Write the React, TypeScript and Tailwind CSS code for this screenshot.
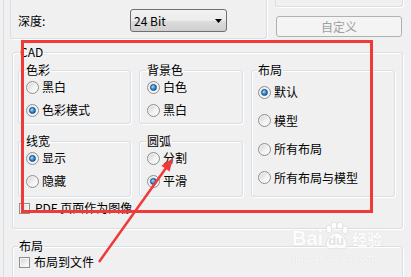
import React from "react";

function Radio({ checked }: { checked?: boolean }) {
  return (
    <span className="flex h-[13px] w-[13px] shrink-0 items-center justify-center rounded-full border border-[#8e8f8f] bg-[linear-gradient(135deg,#cfcfcf,#f2f2f2_55%,#ffffff)] shadow-[inset_0_0_0_1px_#f4f4f4]">
      {checked && (
        <span className="h-[7px] w-[7px] rounded-full border border-[#174a80] bg-[radial-gradient(circle_at_35%_35%,#a8e0ff_0%,#3591dc_45%,#0f4584_100%)]" />
      )}
    </span>
  );
}

function Check() {
  return (
    <span className="h-[11px] w-[11px] shrink-0 border border-[#8e8f8f] bg-[linear-gradient(135deg,#d0d0d0,#f0f0f0_60%,#ffffff)] shadow-[inset_0_0_0_1px_#f6f6f6]" />
  );
}

function RadioRow({ checked, label }: { checked?: boolean; label: string }) {
  return (
    <div className="flex h-[16px] items-center gap-[3px]">
      <Radio checked={checked} />
      <span className="text-[12px] leading-[16px] text-black">{label}</span>
    </div>
  );
}

function Group({
  label,
  className,
  legendClass,
  children,
}: {
  label: string;
  className: string;
  legendClass?: string;
  children?: React.ReactNode;
}) {
  return (
    <fieldset
      className={`min-w-0 rounded-[3px] border border-[#d5dfe5] shadow-[inset_1px_1px_0_#ffffff,1px_1px_0_#ffffff] ${className}`}
    >
      <legend className={`px-[1px] text-[12px] leading-[16px] text-black ${legendClass ?? "-ml-[1px]"}`}>
        {label}
      </legend>
      {children}
    </fieldset>
  );
}

export default function App() {
  return (
    <div className="relative h-[277px] w-[411px] overflow-hidden bg-[#f0f0f0] pl-[3px] font-['Noto_Sans_CJK_SC','Noto_Sans',sans-serif] text-black">
      <div className="h-full border-l border-[#d9dfe4] pl-[6px]">
        {/* top row */}
        <div className="flex h-[39px]">
          <div className="-mt-[10px] flex h-[49px] w-[257px] items-end rounded-b-[3px] border-x border-b border-[#d5dfe5] pb-[6px] pl-[7px] shadow-[1px_1px_0_#ffffff]">
            <span className="flex h-[23px] w-[112px] items-center text-[12px]">深度:</span>
            <div className="flex h-[23px] w-[97px] items-center justify-between rounded-[3px] border border-[#707070] bg-[linear-gradient(#f2f2f2,#ebebeb_50%,#dddddd_51%,#cfcfcf)] pl-[3px] pr-[4px]">
              <span className="text-[12px] leading-[16px]">24 Bit</span>
              <svg width="7" height="4" viewBox="0 0 7 4">
                <polygon points="0,0 7,0 3.5,4" fill="#000" />
              </svg>
            </div>
          </div>
          <div className="ml-[8px] flex w-[128px] flex-col">
            <div className="-mt-[10px] h-[17px] rounded-b-[3px] border-x border-b border-[#d5dfe5] shadow-[1px_1px_0_#ffffff]" />
            <div className="mx-[1px] mt-[9px] flex h-[21px] items-center justify-center rounded-[3px] border border-[#adb2b5] bg-[#f4f4f4] text-[12px] leading-[16px] text-[#a0a0a0]">
              自定义
            </div>
          </div>
        </div>

        {/* CAD */}
        <Group
          label="CAD"
          className="ml-[2px] mt-[5px] w-[391px] pb-[12px] pl-[5px] pr-[7px] pt-[2px]"
          legendClass="ml-[1px]"
        >
          <div className="grid grid-cols-[113px_104px_144px] gap-x-[8px] gap-y-[9px]">
            <Group label="色彩" className="pb-[5px] pl-[7px] pt-[1px]">
              <div className="flex flex-col gap-[7px]">
                <RadioRow label="黑白" />
                <RadioRow label="色彩模式" checked />
              </div>
            </Group>
            <Group label="背景色" className="pb-[5px] pl-[7px] pt-[1px]">
              <div className="flex flex-col gap-[7px]">
                <RadioRow label="白色" checked />
                <RadioRow label="黑白" />
              </div>
            </Group>
            <Group label="布局" className="row-span-2 pl-[6px] pt-[6px]">
              <div className="flex flex-col gap-[12.5px]">
                <RadioRow label="默认" checked />
                <RadioRow label="模型" />
                <RadioRow label="所有布局" />
                <RadioRow label="所有布局与模型" />
              </div>
            </Group>
            <Group label="线宽" className="pb-[7px] pl-[7px] pt-[1px]">
              <div className="flex flex-col gap-[7px]">
                <RadioRow label="显示" checked />
                <RadioRow label="隐藏" />
              </div>
            </Group>
            <Group label="圆弧" className="pb-[7px] pl-[7px] pt-[1px]">
              <div className="flex flex-col gap-[7px]">
                <RadioRow label="分割" />
                <RadioRow label="平滑" checked />
              </div>
            </Group>
          </div>
          <div className="ml-[1px] mt-[3px] flex h-[16px] items-center gap-[5px]">
            <Check />
            <span className="text-[12px] leading-[16px]">PDF 页面作为图像</span>
          </div>
        </Group>

        {/* bottom layout group */}
        <Group label="布局" className="ml-[2px] mt-[9px] h-[60px] w-[391px] pl-[6px]">
          <div className="flex h-[16px] items-center gap-[4px]">
            <Check />
            <span className="text-[12px] leading-[16px]">布局到文件</span>
          </div>
        </Group>
      </div>

      {/* watermark */}
      <div className="absolute left-[292px] top-[222px] flex flex-col items-start opacity-90">
        <div className="flex items-end">
          <span className="font-['Liberation_Sans',sans-serif] text-[20px] font-bold leading-[20px] text-white [text-shadow:0_0_1px_#cfcfcf]">
            Bai
          </span>
          <span className="relative -mb-[2px] h-[28px] w-[27px]">
            <svg width="27" height="28" viewBox="0 0 27 28" className="absolute left-0 top-0">
              <ellipse cx="6" cy="7" rx="3" ry="4" fill="#fff" stroke="#dadada" strokeWidth="0.8" />
              <ellipse cx="11" cy="3.5" rx="3" ry="3.5" fill="#fff" stroke="#dadada" strokeWidth="0.8" />
              <ellipse cx="17" cy="3.5" rx="3" ry="3.5" fill="#fff" stroke="#dadada" strokeWidth="0.8" />
              <ellipse cx="22" cy="8" rx="3" ry="4" fill="#fff" stroke="#dadada" strokeWidth="0.8" />
              <path d="M13.5 11 C8 11 3 18 3 23 C3 27 8 27.5 13.5 26 C19 27.5 24 27 24 23 C24 18 19 11 13.5 11 Z" fill="#fff" stroke="#dadada" strokeWidth="0.8" />
            </svg>
            <span className="absolute left-[5px] top-[12px] font-['Liberation_Sans',sans-serif] text-[13px] font-bold leading-[14px] text-[#e2e2e2]">
              du
            </span>
          </span>
          <span className="ml-[2px] text-[15px] font-bold leading-[18px] text-white [text-shadow:0_0_1px_#cfcfcf]">
            经验
          </span>
        </div>
        <span className="mt-[3px] font-['Liberation_Serif',serif] text-[11px] leading-[12px] text-white [text-shadow:0_0_1px_#cfcfcf]">
          jingyan.baidu.com
        </span>
      </div>

      {/* red highlight rectangle */}
      <div className="absolute left-[21px] top-[40px] h-[173px] w-[352px] border-[3px] border-[#f03a3a]" />

      {/* red arrow */}
      <svg className="absolute left-0 top-0" width="411" height="277" viewBox="0 0 411 277">
        <line x1="99" y1="262" x2="166" y2="168" stroke="#f03a3a" strokeWidth="2.5" />
        <polygon points="173,158 169.6,171.5 161.4,165.7" fill="#f03a3a" />
      </svg>
    </div>
  );
}
